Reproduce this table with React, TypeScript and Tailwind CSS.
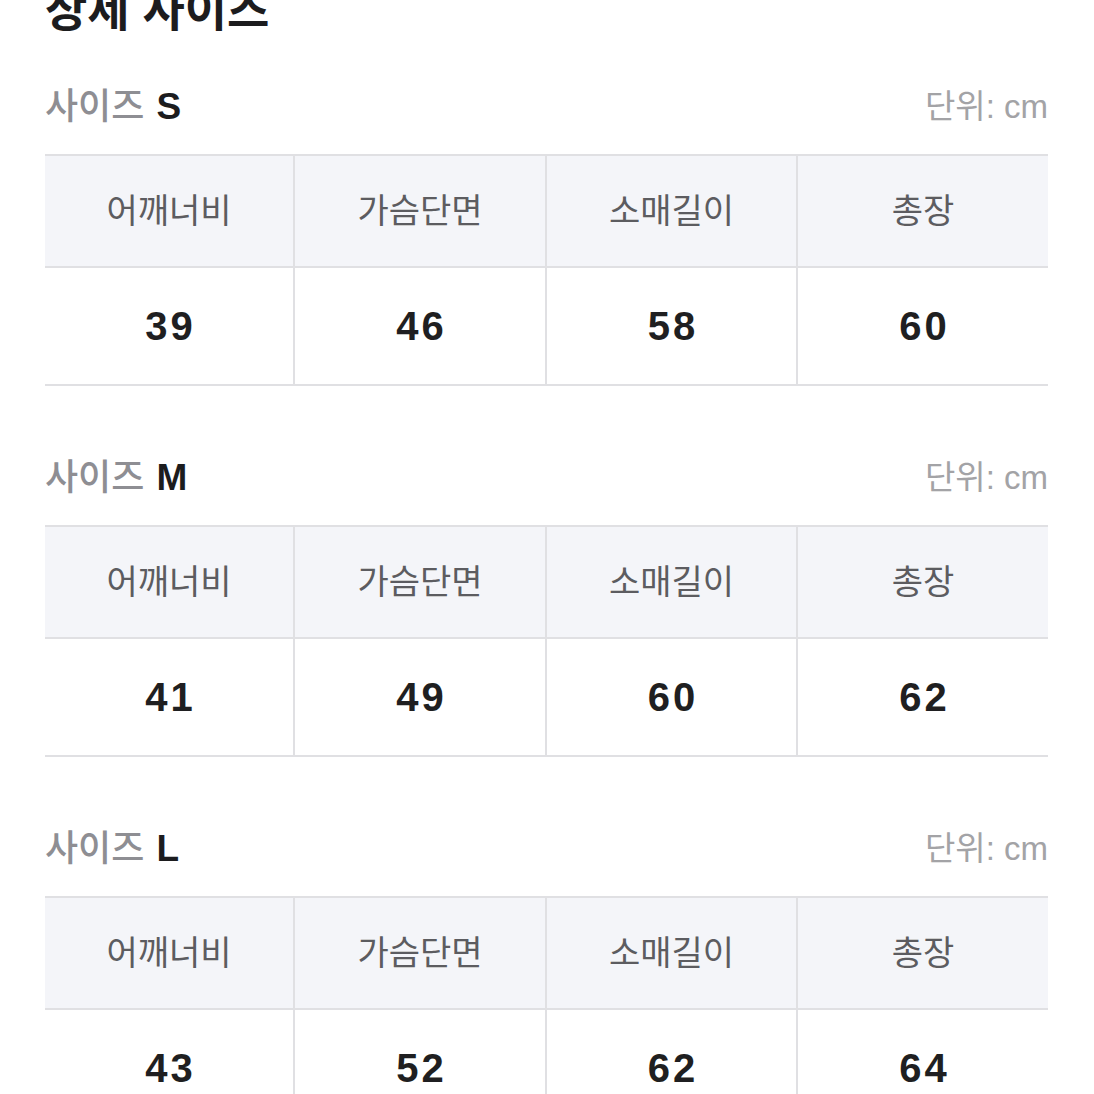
import React from "react";

const headers = ["어깨너비", "가슴단면", "소매길이", "총장"];
const sections = [
  { size: "S", values: ["39", "46", "58", "60"] },
  { size: "M", values: ["41", "49", "60", "62"] },
  { size: "L", values: ["43", "52", "62", "64"] },
];

const font = { fontFamily: '"Liberation Sans", "Noto Sans CJK KR", sans-serif' };

function Section({ size, values, first }: { size: string; values: string[]; first: boolean }) {
  return (
    <div className={first ? "mt-[55px]" : "mt-[72px]"}>
      <div className="flex h-[40px] items-center justify-between">
        <div className="flex items-center leading-[40px]">
          <span className="text-[36px] text-[#8e8e93] font-medium">사이즈</span>
          <span className="ml-[12px] text-[37px] font-bold text-[#1c1c1e]">{size}</span>
        </div>
        <div className="text-[33px] leading-[40px] text-[#a3a3a6]">단위: cm</div>
      </div>
      <div className="mt-[27px] border-y-2 border-[#e0e0e3]">
        <div className="grid grid-cols-[248px_252px_251px_1fr] bg-[#f4f5f9] border-b-2 border-[#e0e0e3]">
          {headers.map((h, i) => (
            <div
              key={h}
              className={`flex h-[110px] items-center justify-center text-[34px] text-[#5c5c60] ${i > 0 ? "border-l-2 border-[#e0e0e3]" : ""}`}
            >
              {h}
            </div>
          ))}
        </div>
        <div className="grid grid-cols-[248px_252px_251px_1fr] bg-white">
          {values.map((v, i) => (
            <div
              key={i}
              className={`flex h-[116px] items-center justify-center pl-[3px] text-[40px] tracking-[3px] font-bold text-[#1f1f21] ${i > 0 ? "border-l-2 border-[#e0e0e3]" : ""}`}
            >
              {v}
            </div>
          ))}
        </div>
      </div>
    </div>
  );
}

export default function App() {
  return (
    <div className="h-[1094px] w-[1094px] overflow-hidden bg-white pl-[45px] pr-[46px]" style={font}>
      <div className="-mt-[12px] h-[44px] text-[46px] leading-[44px] font-bold text-[#1c1c1e]">
        상세 사이즈
      </div>
      {sections.map((s, i) => (
        <Section key={s.size} size={s.size} values={s.values} first={i === 0} />
      ))}
    </div>
  );
}
